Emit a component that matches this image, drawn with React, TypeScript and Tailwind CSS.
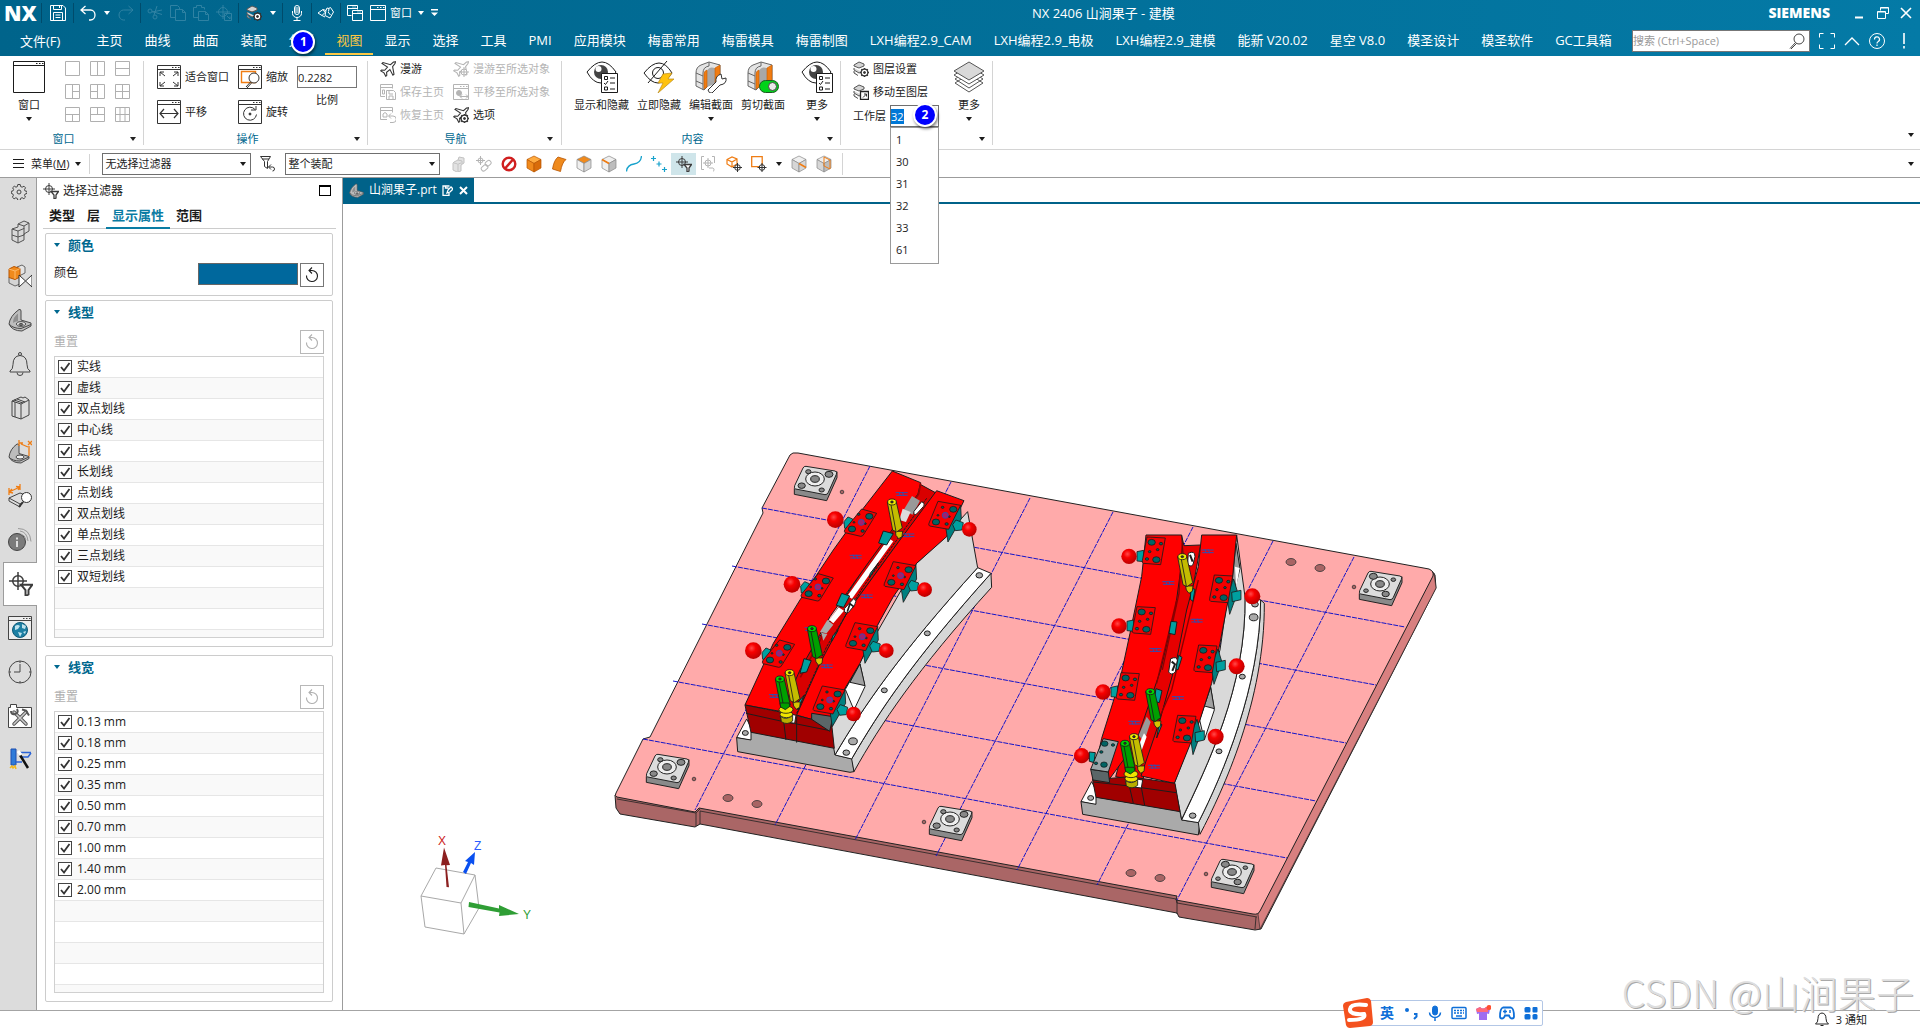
import { useEffect, useRef, useState } from "react";
import type { ReactNode } from "react";

const menuTabs = [
  "主页", "曲线", "曲面", "装配", "分析", "视图", "显示", "选择", "工具", "PMI", "应用模块",
  "梅雷常用", "梅雷模具", "梅雷制图", "LXH编程2.9_CAM", "LXH编程2.9_电极", "LXH编程2.9_建模",
  "能新 V20.02", "星空 V8.0", "模圣设计", "模圣软件", "GC工具箱",
];
const lineTypes = ["实线", "虚线", "双点划线", "中心线", "点线", "长划线", "点划线", "双点划线", "单点划线", "三点划线", "双短划线"];
const lineWidths = ["0.13 mm", "0.18 mm", "0.25 mm", "0.35 mm", "0.50 mm", "0.70 mm", "1.00 mm", "1.40 mm", "2.00 mm"];
const layers = ["1", "30", "31", "32", "33", "61"];

type IconProps = { s?: number; children: ReactNode; className?: string };

function Icon({ s = 16, children, className = "" }: IconProps) {
  return (
    <svg width={s} height={s} viewBox={`0 0 ${s} ${s}`} fill="none" stroke="currentColor" className={`shrink-0 ${className}`} aria-hidden="true">
      {children}
    </svg>
  );
}

function Caret({ className = "" }: { className?: string }) {
  return (
    <svg width="6" height="4" viewBox="0 0 6 4" className={`shrink-0 ${className}`} aria-hidden="true">
      <path d="M0 0h6L3 4z" fill="currentColor" />
    </svg>
  );
}

/* ---------- small icons ---------- */

const FilterTarget = ({ s = 16 }: { s?: number }) => (
  <svg width={s} height={s} viewBox="0 0 16 16" fill="none" stroke="#3c3c3c" className="shrink-0" aria-hidden="true">
    <circle cx="6" cy="6" r="3.5" />
    <path d="M6 0v12M0 6h12" />
    <path d="M8 8.5h7.5l-2.5 3.5v3l-2 1v-4z" fill="#fff" strokeWidth="1.3" />
  </svg>
);

const Win = ({ s, children }: { s: number; children?: ReactNode }) => (
  <Icon s={s}>
    <path d={`M.5 .5h${s - 1}v${s - 1}h-${s - 1}zM.5 4.5h${s - 1}`} />
    <path d={`M${s - 9} 2.5h1.5M${s - 6} 2.5h1.5M${s - 3} 2.5h1.5`} />
    {children}
  </Icon>
);

const Bracket = ({ s = 24, dim = false }: { s?: number; dim?: boolean }) => (
  <svg width={s} height={s} viewBox="0 0 24 24" stroke={dim ? "#555" : "#4a4a4a"} className="shrink-0" aria-hidden="true">
    <path d="M1 16Q2 8 11 1.500q2-.5 2 1.500v9l10 3v3l-9 5q-10 0-13-7z" fill="#bdbdbd" />
    <path d="M5 15q0-6 5-9.500V13q-4 1-5 2" fill="#8f8f8f" stroke="none" />
    <path d="M1 16q4 4.500 12 4.500l10-4" fill="none" />
    <ellipse cx="13" cy="16" rx="4.500" ry="2.300" fill="#e4e4e4" />
    <ellipse cx="13" cy="16.500" rx="2" ry="1" fill="#777" />
  </svg>
);

const Cube = ({ top, left, right, line, children }: { top: string; left: string; right: string; line?: string; children?: ReactNode }) => (
  <Icon s={18}>
    <path d="M9 1l7 3.5-7 4-7-4z" fill={top} stroke={line ?? "#888"} strokeWidth=".7" />
    <path d="M2 4.5l7 4V17l-7-4z" fill={left} stroke={line ?? "#888"} strokeWidth=".7" />
    <path d="M16 4.5l-7 4V17l7-4z" fill={right} stroke={line ?? "#888"} strokeWidth=".7" />
    {children}
  </Icon>
);

const Layers = ({ children }: { children?: ReactNode }) => (
  <Icon>
    <path d="M1 4l5-3 5 2v2L6 7 1 5zM1 7v2l5 3 3-1M1 10v2l4 2.5" fill="#d4d4d4" stroke="#555" />
    {children}
  </Icon>
);

const Gear = () => (
  <g stroke="#333">
    <circle cx="11.5" cy="11.5" r="3.3" fill="#fff" strokeWidth="1.2" />
    <circle cx="11.5" cy="11.5" r="1" fill="#333" />
    <path d="M11.5 7v1M11.5 15v1M7 11.5h1M15 11.5h1M8.3 8.3l.8.8M14 14l.8.8M8.3 14.8l.8-.8M14 9l.8-.8" strokeWidth="1.4" />
  </g>
);

const Plane = ({ children }: { children?: ReactNode }) => (
  <Icon>
    <path d="M15.5.7l-2 .3-3 2.7L3 1.5l-1 1 5.5 3.6L4.7 9.3 1.6 9l-.9.9 3.3 2 1.8 3.4 1-1-.2-3 3.3-2.7 3 5.6 1.1-1-1.4-7.6 2.4-3z" strokeWidth="1.1" />
    {children}
  </Icon>
);

const EyeList = () => (
  <Icon s={32}>
    <path d="M1 11Q9 1 16 1t14 10Q23 22 15 22T1 11z" />
    <circle cx="15" cy="11" r="7" fill="#444" stroke="none" />
    <circle cx="12.5" cy="8" r="3" fill="#fff" stroke="none" />
    <path d="M15.5 12.5h16v19h-16z" fill="#fff" />
    <path d="M18.5 15.5h3v3h-3zM18.5 26h3v3h-3zM24 17h5M24 22h5M24 28h5M18 22l1.5 1.5L22 20" />
  </Icon>
);

const Section = ({ children }: { children: ReactNode }) => (
  <Icon s={32}>
    <path d="M1 12q0-6 5-8l8-3 11 3v20l-8-3-8 8-8-4z" fill="#e4e4e4" stroke="#666" />
    <path d="M14 1v4q-6 1-6 7v17M1 12l7 3M1 20l7 3" stroke="#666" />
    <path d="M12 26V10q2-5 8-3v16z" fill="#a8a8a8" stroke="none" />
    <path d="M9 28V13q0-3 3-4v17zM20 24V7l5-3v20z" fill="#f07c12" stroke="#c65c00" strokeWidth=".6" />
    {children}
  </Icon>
);

const ResetIcon = () => (
  <Icon>
    <path d="M8 3.5a5.500 5.500 0 1 1-5.500 5M8 3.500H5.500M8 .5L5 3.500l3 3" strokeWidth="1.100" />
  </Icon>
);

/* ---------- title bar ---------- */

function QuickGroup({ children, className = "" }: { children: ReactNode; className?: string }) {
  return <div className={`flex h-5 items-center justify-center border-l border-[#004b6b] ${className}`}>{children}</div>;
}

function QuickButton({ label, dim, children }: { label: string; dim?: boolean; children: ReactNode }) {
  return (
    <button aria-label={label} className={dim ? "text-[#2f82a3]" : "text-white"}>
      {children}
    </button>
  );
}

function TitleBar() {
  return (
    <div className="grid h-[26px] grid-cols-[18fr_auto_13fr] items-center text-white">
      <div className="flex items-center pl-1">
        <span className="w-[37px] text-[21px] leading-6 font-extrabold">NX</span>
        <QuickGroup className="w-8">
          <QuickButton label="保存">
            <Icon><path d="M.5.5H13l2.5 2.5v12.5H.5zM3.5.5v4h8v-4M3.5 15.5v-8h9v8M5.5 10h5M5.5 12.5h5M9.5 1v2" /></Icon>
          </QuickButton>
        </QuickGroup>
        <QuickGroup className="w-[67px] gap-2">
          <QuickButton label="撤消">
            <Icon><path d="M5.5 1L1 5l4.500 4M1 5h9.500a4.500 5 0 0 1 0 10H9" strokeWidth="1.3" /></Icon>
          </QuickButton>
          <Caret />
          <QuickButton label="重做" dim>
            <Icon><path d="M10.500 1L15 5l-4.500 4M15 5H5.500a4.500 5 0 0 0 0 10H7" /></Icon>
          </QuickButton>
        </QuickGroup>
        <QuickGroup className="w-[98px] gap-[7px]">
          <QuickButton label="剪切" dim>
            <Icon><circle cx="3" cy="6" r="2" /><circle cx="8" cy="12" r="2" /><path d="M5 7l10-2M7 10L10 1M5 6.500l10 3" /></Icon>
          </QuickButton>
          <QuickButton label="复制" dim>
            <Icon><path d="M5.500 12.500h-5v-12h7l2 2v2M5.500 4.500h7l3 3v8h-10zM12.500 4.500v3h3" /></Icon>
          </QuickButton>
          <QuickButton label="粘贴" dim>
            <Icon><path d="M5.500 12.500h-5v-10h3v-2h5v2h3v2M5.500 6.500h7l3 3v6h-10zM12.500 6.500v3h3" /></Icon>
          </QuickButton>
          <QuickButton label="重复命令" dim>
            <Icon><circle cx="7" cy="7" r="4.500" /><path d="M7 0v14M0 7h14M8.500 8.500v7h7v-7zM11 11l3 3v-2.500" /></Icon>
          </QuickButton>
        </QuickGroup>
        <QuickGroup className="w-11 gap-2">
          <QuickButton label="对象首选项"><Layers><Gear /></Layers></QuickButton>
          <Caret />
        </QuickGroup>
        <QuickGroup className="w-[29px]">
          <QuickButton label="语音">
            <Icon><rect x="5.500" y=".5" width="5" height="9" rx="2.500" /><path d="M3.500 6v2.500a4.500 4 0 0 0 9 0V6M8 12.500v3M4.500 15.500h7M6 3h4M6 5h4M6 7h4" /></Icon>
          </QuickButton>
        </QuickGroup>
        <QuickGroup className="w-[29px]">
          <QuickButton label="触控">
            <Icon><path d="M0 8l5-3.500 2 3-3 3zM5 4.500l3 1 1-2.500 2 .5-.5 3M8 5.500l-1 5 5 2.500 3.500-6-3-4.500-2 1M10 7l2.500 3M4 10.500l3 1.500" /></Icon>
          </QuickButton>
        </QuickGroup>
        <QuickGroup className="gap-[7px] pl-1.5">
          <QuickButton label="切换窗口">
            <Icon><path d="M4.500 10.500h-4V.5h10v4M.5 3.500h10M5.500 5.500h10v10h-10zM5.500 8.500h10M6 1.500v1M8 1.500v1M11 6.500v1M13 6.500v1" /></Icon>
          </QuickButton>
          <button className="flex items-center gap-1 text-[11px] leading-4">
            <Win s={16} />
            窗口
            <Caret className="ml-0.5" />
          </button>
          <button aria-label="自定义工具条">
            <svg width="7" height="8" viewBox="0 0 7 8" fill="currentColor"><path d="M0 0h7v1.500H0zM0 3.500h7L3.500 7z" /></svg>
          </button>
        </QuickGroup>
      </div>
      <h1 className="text-[13px] leading-4">NX 2406 山涧果子 - 建模</h1>
      <div className="flex items-center justify-end pr-2">
        <span className="mr-6 text-[14px] leading-4 font-extrabold">SIEMENS</span>
        <div className="flex gap-[11px]">
          <button aria-label="最小化"><Icon s={12}><path d="M1 10.500h8" strokeWidth="2" /></Icon></button>
          <button aria-label="还原"><Icon s={12}><path d="M3.500 3.500v-3h8v6h-3M3.500 1h8M.5 4.500h8v7h-8zM.5 5h8" /></Icon></button>
          <button aria-label="关闭"><Icon s={12}><path d="M1 1l10 10M11 1L1 11" strokeWidth="1.600" /></Icon></button>
        </div>
      </div>
    </div>
  );
}

function StepBadge({ n, className }: { n: number; className: string }) {
  return (
    <span className={`absolute z-20 flex size-6 items-center justify-center rounded-full border-2 border-white bg-[#0000fe] text-[12px] leading-none font-bold text-white shadow-[1px_2px_3px_rgba(0,0,0,0.5)] ${className}`}>
      {n}
    </span>
  );
}

function MenuBar() {
  const [tab, setTab] = useState("视图");
  return (
    <div className="flex h-[30px] items-center pr-2 text-[13px] leading-[18px] text-white">
      <button className="mr-[14px] pr-[11px] pl-5">文件(F)</button>
      <nav className="flex flex-1">
        {menuTabs.map((t) => (
          <span key={t} className="relative">
            <button
              onClick={() => setTab(t)}
              className={`h-[27px] border-b-2 px-[11px] whitespace-nowrap ${tab === t ? "border-[#fdc844] text-[#fdc844]" : "border-transparent"}`}
            >
              {t}
            </button>
            {t === "分析" && <StepBadge n={1} className="top-0.5 left-3.5" />}
          </span>
        ))}
      </nav>
      <div className="flex items-center gap-[9px]">
        <label className="flex h-[22px] w-[178px] items-center border border-[#777] bg-white pr-1 text-[#444]">
          <input aria-label="搜索" placeholder="搜索 (Ctrl+Space)" className="min-w-0 flex-1 text-[11px] outline-none placeholder:text-[#999]" />
          <Icon><circle cx="10" cy="6" r="5" /><path d="M6.500 9.500L1 15.500M7.500 10.500L2 16" /></Icon>
        </label>
        <button aria-label="全屏"><Icon><path d="M.5 4.500v-4h4M11.500.5h4v4M15.500 11.500v4h-4M4.500 15.500h-4v-4" /></Icon></button>
        <button aria-label="最小化功能区"><Icon><path d="M1 12l7-7 7 7" strokeWidth="1.300" /></Icon></button>
        <button aria-label="帮助" className="mr-1.5">
          <Icon><circle cx="8" cy="8" r="7.500" /><path d="M5.500 6.500a2.500 2.500 0 1 1 3.500 2.200q-1 .5-1 1.800M8 11.500v1.500" strokeWidth="1.200" /></Icon>
        </button>
        <button aria-label="警报" className="-ml-1"><Icon><path d="M8 0v11M8 13v2.500" strokeWidth="1.600" /></Icon></button>
      </div>
    </div>
  );
}

/* ---------- ribbon ---------- */

function Group({ label, children, className = "" }: { label: string; children: ReactNode; className?: string }) {
  return (
    <section className={`flex h-[84px] flex-col border-r border-[#d4d4d4] ${className}`}>
      <div className="flex h-[72px]">{children}</div>
      <div className="relative flex h-3 items-center justify-center pr-[22px] text-[11px] leading-3 text-[#00688f]">
        {label}
        <button aria-label={`${label}选项`} className="absolute right-0 text-[#222]">
          <Caret />
        </button>
      </div>
    </section>
  );
}

function BigButton({ icon, label, menu, className = "" }: { icon: ReactNode; label: string; menu?: boolean; className?: string }) {
  return (
    <button className={`flex min-w-8 flex-col items-center self-start whitespace-nowrap ${className}`}>
      {icon}
      <span className="mt-1 leading-4">{label}</span>
      {menu && <Caret className="mt-1" />}
    </button>
  );
}

function RowButton({ icon, label, disabled }: { icon: ReactNode; label: string; disabled?: boolean }) {
  return (
    <button disabled={disabled} className="flex items-center gap-1 leading-4 whitespace-nowrap text-[#333] disabled:text-[#b4b4b4]">
      {icon}
      <span className={disabled ? "" : "text-[#1b1b1b]"}>{label}</span>
    </button>
  );
}

const layouts = [
  "", "M7.500 0v15", "M0 7.500h15", "M7.500 0v15M7.500 7.500h7.500", "M7.500 0v15M0 7.500h7.500", "M7.500 0v15M0 7.500h15",
  "M0 7.500h15M7.500 7.500v7.500", "M0 7.500h15M7.500 0v7.500", "M5 0v15M10 0v15M0 7.500h15",
];

function WorkLayer() {
  const ref = useRef<HTMLInputElement>(null);
  const [layer, setLayer] = useState("32");
  useEffect(() => {
    ref.current?.focus();
    ref.current?.select();
  }, []);
  return (
    <div className="relative mt-[5px] flex items-center gap-1">
      <label htmlFor="work-layer">工作层</label>
      <input
        id="work-layer"
        ref={ref}
        value={layer}
        onChange={(e) => setLayer(e.target.value)}
        className="h-[22px] w-[49px] border border-[#6f6f6f] bg-white outline-none selection:bg-[#0078d7] selection:text-white"
      />
      <StepBadge n={2} className="-top-0.5 left-[60px]" />
      <ul role="listbox" aria-label="工作层" className="absolute top-[22px] right-0 z-10 w-[49px] border border-[#9a9a9a] bg-white pt-px pb-0.5">
        {layers.map((l) => (
          <li key={l} role="option" aria-selected={l === layer} onClick={() => setLayer(l)} className="px-[5px] leading-[22px]">
            {l}
          </li>
        ))}
      </ul>
    </div>
  );
}

function Ribbon() {
  return (
    <div className="flex h-[94px] border-b border-[#d4d4d4] bg-white pt-[5px] text-[11px] text-[#1b1b1b]">
      <Group label="窗口" className="pr-[7px] pl-[13px]">
        <BigButton icon={<Win s={32} />} label="窗口" menu />
        <div className="ml-5 grid grid-cols-3 gap-x-[10px] gap-y-2 self-start pr-1.5 text-[#b0b0b0]">
          {layouts.map((d, i) => (
            <button key={i} aria-label={`布局 ${i + 1}`}>
              <Icon s={15}><path d={`M.5 .5h14v14H.5z${d}`} /></Icon>
            </button>
          ))}
        </div>
      </Group>

      <Group label="操作" className="pr-[7px] pl-[13px]">
        <div className="flex gap-[9px] pt-1 pr-[3px]">
          <div className="flex flex-col gap-[11px]">
            <RowButton label="适合窗口" icon={<Win s={24}><path d="M3 11V7h4M3 7l5 4M17 7h4v4M21 7l-5 4M3 17v4h4M3 21l5-4M21 17v4h-4M21 21l-5-4" /></Win>} />
            <RowButton label="平移" icon={<Win s={24}><path d="M3 13.500h18M7 9l-4 4.500L7 18M17 9l4 4.500-4 4.500" strokeWidth="1.200" /></Win>} />
          </div>
          <div className="flex flex-col gap-[11px]">
            <RowButton label="缩放" icon={<Win s={24}><path d="M3.500 6.500h14v11h-14z" stroke="#f07c12" strokeWidth="1.400" /><circle cx="16" cy="13" r="5" fill="#fff" /><path d="M12.500 17L8 22M13.500 18L9 23" /></Win>} />
            <RowButton label="旋转" icon={<Win s={24}><path d="M17 9.500a6.500 6.500 0 1 0 1.500 5M13 10h5V6" /><circle cx="12" cy="14" r="1" fill="#333" /></Win>} />
          </div>
          <div className="flex flex-col items-center gap-1 pt-px">
            <input id="scale" defaultValue="0.2282" className="h-[22px] w-[60px] border border-[#777] text-[11px]" />
            <label htmlFor="scale" className="leading-4">比例</label>
          </div>
        </div>
      </Group>

      <Group label="导航" className="pr-2 pl-3">
        <div className="flex gap-[9px] pr-[3px]">
          <div className="flex flex-col gap-[7px]">
            <RowButton label="漫游" icon={<Plane />} />
            <RowButton label="保存主页" disabled icon={<Icon><path d="M5 12.500H.5V.5h12v4M.5 3.500h12M2.500 6h2v4h-2zM6.500 6.500h7l2 2v7h-9zM9 7v3h4M9 15v-3h4v3" /></Icon>} />
            <RowButton label="恢复主页" disabled icon={<Icon><path d="M7 12.500H.5V.5h12v5M.5 3.500h12M3 10V7l2-1.500L7 7v3zM9 9h4a3 3 0 0 1 0 6.500h-3M11 6.500L8.500 9l2.500 2.500" /></Icon>} />
          </div>
          <div className="flex flex-col gap-[7px]">
            <RowButton label="漫游至所选对象" disabled icon={<Plane><circle cx="11" cy="11" r="3" fill="#fff" /><path d="M11 6v10M6 11h10" /></Plane>} />
            <RowButton label="平移至所选对象" disabled icon={<Win s={16}><circle cx="6" cy="9" r="2.500" fill="#b4b4b4" /><path d="M7 12.500h8M9 10.500l-2 2 2 2M13 10.500l2 2-2 2" /></Win>} />
            <RowButton label="选项" icon={<Plane><Gear /></Plane>} />
          </div>
        </div>
      </Group>

      <Group label="内容" className="pr-[7px] pl-3">
        <div className="flex gap-2">
          <BigButton icon={<EyeList />} label="显示和隐藏" />
          <BigButton
            label="立即隐藏"
            icon={<Icon s={32}><path d="M1 12Q9 2 16 2t13 10Q22 22 15 22T1 12z" /><circle cx="15" cy="12" r="5.500" /><path d="M24 0L5 22" /><path d="M20 13l9-1-4 6h6L15 32l5-10h-5z" fill="#ffc20e" stroke="#b98a1e" strokeWidth=".7" /></Icon>}
          />
          <BigButton
            menu
            label="编辑截面"
            icon={<Section><path d="M13 29l8-8q-1-6 5-8l1 5 4-1q1 6-6 7l-8 8q-3 1-4-3z" fill="#fff" stroke="#333" /></Section>}
          />
          <BigButton
            label="剪切截面"
            icon={<Section><rect x="12.500" y="19.500" width="19" height="12" rx="6" fill="#00d21a" stroke="#1d5a22" /><circle cx="25.500" cy="25.500" r="4" fill="#e8e8e8" stroke="#444" /></Section>}
          />
          <BigButton icon={<EyeList />} label="更多" menu className="ml-2" />
        </div>
      </Group>

      <section className="flex h-[84px] flex-col border-r border-[#d4d4d4] pr-[7px] pl-3">
        <div className="flex h-[72px] gap-[14px]">
          <div className="flex flex-col">
            <RowButton label="图层设置" icon={<Layers><Gear /></Layers>} />
            <div className="mt-[7px]">
              <RowButton label="移动至图层" icon={<Layers><path d="M7.500 7.500h8v8h-8z" fill="#fff" stroke="#222" strokeWidth="1.300" /><path d="M10 13.500l3.500-3.500M11 10h2.500v2.500" /></Layers>} />
            </div>
            <WorkLayer />
          </div>
          <BigButton
            menu
            label="更多"
            icon={<Icon s={32}><path d="M16 13L30 22 16 31 2 22zM16 9L30 18 16 27 2 18z" fill="#fff" stroke="#555" /><path d="M16 5L31 14 16 23 1 14z" fill="#fff" stroke="#555" /><path d="M16 1L31 10 16 19 1 10z" fill="#d9d9d9" stroke="#555" /></Icon>}
          />
        </div>
        <button aria-label="图层选项" className="flex h-3 items-center self-end"><Caret /></button>
      </section>
      <button aria-label="功能区选项" className="mb-1.5 ml-auto self-end p-1.5"><Caret /></button>
    </div>
  );
}

/* ---------- selection bar ---------- */

function Combo({ value, label, className }: { value: string; label: string; className: string }) {
  return (
    <div className={`relative ${className}`}>
      <select aria-label={label} defaultValue={value} className="h-[22px] w-full appearance-none border border-[#6f6f6f] bg-white pl-0.5 leading-4">
        <option>{value}</option>
      </select>
      <Caret className="pointer-events-none absolute top-[9px] right-[5px]" />
    </div>
  );
}

const g1 = "#efefef";
const g2 = "#d6d6d6";
const g3 = "#bdbdbd";

const snapTools: { name: string; icon: ReactNode; on?: boolean }[] = [
  { name: "组件", icon: <Icon><path d="M3 6l4-2 1-3 5 1v5l-3 2v6l-4 1-4-2V7zM3 7l4 1 3-1M7 8v7M7 4l4 1v3" fill="#e2e2e2" stroke="#c2c2c2" /></Icon> },
  { name: "链接", icon: <Icon className="text-[#b4b4b4]"><circle cx="4.500" cy="4.500" r="2.500" /><path d="M4.500 0v9M0 4.500h9" /><rect x="9" y="5" width="6" height="4.500" rx="2" transform="rotate(-40 12 7)" /><rect x="5" y="10" width="7" height="4.500" rx="2" transform="rotate(-40 8 12)" /></Icon> },
  { name: "无", icon: <Icon><circle cx="8" cy="8" r="6.300" stroke="#d01f1f" strokeWidth="2.400" /><path d="M12 3.500L4 12.500" stroke="#d01f1f" strokeWidth="2.400" /></Icon> },
  { name: "实体", icon: <Cube top="#ffab40" left="#f08a1c" right="#d96c0a" line="#b85400" /> },
  { name: "片体", icon: <Icon><path d="M1.500 13Q3 4 7 1l8 2.500q-4 3-5.500 12z" fill="#ef8a1d" stroke="#b85400" strokeWidth=".8" /></Icon> },
  { name: "面", icon: <Cube top="#f08a1c" left={g1} right={g2} /> },
  { name: "边", icon: <Cube top={g1} left={g1} right={g3}><path d="M2 4.500l7 4" stroke="#f07c12" strokeWidth="1.800" /></Cube> },
  { name: "曲线", icon: <Icon><path d="M.5 15.500Q1 9 8 8t7.500-8" stroke="#17a2cc" strokeWidth="1.300" /></Icon> },
  { name: "点", icon: <Icon><path d="M2.500 0v5M0 2.500h5M8 5.500v5M5.500 8h5M13.500 11v5M11 13.500h5" stroke="#17a2cc" strokeWidth="1.200" /></Icon> },
  { name: "选择过滤器", icon: <FilterTarget />, on: true },
  { name: "重置过滤器", icon: <Icon className="text-[#b4b4b4]"><circle cx="7" cy="7" r="3" /><path d="M7 2v10M2 7h10M3 .5H.5v13H3M11 .5h2.500V7M8 12h4a2 2 0 0 1 0 3.500" /></Icon> },
  { name: "选择意图", icon: <Icon><path d="M1 3.500L6 1l5 2v5l-5 3-5-3zM1 3.500L6 6l5-3M6 6v5" stroke="#ef7d14" strokeWidth="1.200" /><circle cx="11.500" cy="11.500" r="2.800" fill="#fff" stroke="#333" /><path d="M11.500 7v9M7 11.500h9" stroke="#333" /></Icon> },
  { name: "框选", icon: <Icon><path d="M.7.700h10.500v10H.7z" stroke="#ef7d14" strokeWidth="1.300" /><circle cx="11" cy="11.500" r="2.800" fill="#fff" stroke="#333" /><path d="M11 7v9M6.500 11.500h9" stroke="#333" /></Icon> },
];

function SelectionBar() {
  return (
    <div className="flex h-7 items-center border-b border-[#9c9c9c] bg-white text-[11px] leading-4 text-[#1b1b1b]">
      <button className="ml-[13px] flex items-center gap-[7px]">
        <Icon s={11}><path d="M0 1.500h11M0 5.500h11M0 9.500h11" /></Icon>
        <span>菜单(<u>M</u>)</span>
        <Caret className="-ml-px" />
      </button>
      <span className="mr-3 ml-2 h-5 w-px bg-[#d4d4d4]" />
      <Combo label="类型过滤器" value="无选择过滤器" className="w-[149px]" />
      <button aria-label="清除过滤器" className="mx-[9px] text-[#333]">
        <Icon><path d="M.5.5h10l-3 5v7l-3-2v-5zM2 3h7M8.500 11h4a2 2 0 0 1 0 4M11 8.500L8.500 11l2.500 2.500" /></Icon>
      </button>
      <Combo label="选择范围" value="整个装配" className="w-[155px]" />
      <div className="ml-1.5 flex h-[22px]">
        {snapTools.map((t) => (
          <button key={t.name} aria-label={t.name} className={`flex w-[25px] items-center justify-center ${t.on ? "bg-[#cfe5ea]" : ""}`}>
            {t.icon}
          </button>
        ))}
        <button aria-label="更多选择" className="flex w-[15px] items-center justify-center"><Caret /></button>
        <button aria-label="面规则" className="flex w-[25px] items-center justify-center">
          <Cube top={g1} left={g2} right={g2}><path d="M9 8.500l7 4" stroke="#f07c12" strokeWidth="1.500" /></Cube>
        </button>
        <button aria-label="体规则" className="flex w-[25px] items-center justify-center">
          <Cube top={g1} left={g2} right={g3}><path d="M9 2v9l6 3V5z" stroke="#f07c12" /></Cube>
        </button>
        <span className="ml-1.5 w-px bg-[#d4d4d4]" />
      </div>
      <button aria-label="工具条选项" className="ml-auto p-1.5"><Caret /></button>
    </div>
  );
}

/* ---------- resource rail ---------- */

const railItems: { name: string; icon: ReactNode }[] = [
  { name: "装配导航器", icon: <Icon s={24}><path d="M4 9l6-2V4l6-3 5 2v8l-5 3v6l-6 3-6-3z" fill="#d8d8d8" stroke="#555" /><path d="M4 9l6 2 6-2.500V6l5-3M10 4l6 2M10 11v12M4 15l6 2 6-2M16 8v7" stroke="#555" /></Icon> },
  { name: "约束导航器", icon: <Icon s={24}><path d="M9 3l5-2 3 2v6l-6 3z" fill="#e5e5e5" stroke="#666" /><path d="M1 13v6l6 3 5-2v-7z" fill="#d4d4d4" stroke="#666" /><path d="M1 5l5-2.500 6 2V13l-5 2.500-6-2z" fill="#f08a1c" stroke="#b85400" /><path d="M1 5l6 2 5-2.500M7 7v8" stroke="#ffb866" /><path d="M11 11l6.500 6L11 23zM24 11l-6.500 6 6.500 6z" fill="#fff" stroke="#333" /></Icon> },
  { name: "部件导航器", icon: <Bracket /> },
  { name: "通知", icon: <Icon s={24}><circle cx="12" cy="2" r="1.500" /><path d="M12 3.500q7 .5 7 9 0 5 3 6.500v1H2v-1q3-1.500 3-6.500 0-8.500 7-9zM9 20.500a3 3 0 0 0 6 0" /></Icon> },
  { name: "重用库", icon: <Icon s={24}><path d="M4 5l9-4 2 1 2-1 4 3v15l-8 4-9-3zM4 5l9 3 8-4M13 8v15M6 4l9 3M9 3l8 3M7 6v15" /></Icon> },
  { name: "产品模板", icon: <Icon s={24}><path d="M1 17Q2 9 9 4q2-.5 2 1.500v8l10 3v2l-8 4.500Q4 23 1 17z" fill="#bdbdbd" stroke="#4a4a4a" /><path d="M1 17q3 4 11 4l9-4" stroke="#4a4a4a" /><ellipse cx="12" cy="17" rx="4" ry="2" fill="#eee" /><path d="M11 0v6M11 3h4M13 4l7 3M21 6v10M20 1l4 4M24 1l-4 4" stroke="#ef7d14" strokeWidth="1.300" /></Icon> },
  { name: "MBD 导航器", icon: <Icon s={24}><path d="M1 14l11-5 11 4-11 7zM1 14v3l11 6v-3" fill="#ddd" stroke="#444" /><path d="M1 4v7M12 0v6M1 8L12 3M1 8l3-3M1 8l4 1M12 3L8 2.500M12 3l-2 3" stroke="#ef7d14" strokeWidth="1.300" /><circle cx="18.500" cy="13.500" r="5" fill="#fff" stroke="#333" /><path d="M15 18l-4 5" stroke="#333" strokeWidth="2" /></Icon> },
  { name: "HD3D 工具", icon: <Icon s={24}><circle cx="9" cy="14" r="8.500" fill="#7b7b7b" stroke="#444" /><path d="M9 9.500v2M9 13v6" stroke="#fff" strokeWidth="1.500" /><path d="M12 3q7 1 8 10M10 .5q12 0 13 13M13 6q4 1 5 6" stroke="#999" /></Icon> },
  { name: "选择过滤器", icon: <FilterTarget s={24} /> },
  { name: "Web 浏览器", icon: <Icon s={24}><path d="M.5.5h23v23H.5z" fill="#eee" /><path d="M.5 4.500h23M15 2.500h1.500M18 2.500h1.500M21 2.500h1.500" /><circle cx="12" cy="14" r="7.500" fill="#1d7fa3" stroke="#0e5a78" /><path d="M7 10q3-2 5 0l-2 3-3 1zM14 8l4 2-1 3-3-1zM10 16l4 1-2 4zM15 16l3-1-1 3z" fill="#bfe3ee" stroke="none" /></Icon> },
  { name: "历史记录", icon: <Icon s={24}><circle cx="12" cy="12" r="11" /><path d="M12 4v8H6M12 1v2M12 21v2M1 12h2M21 12h2" /></Icon> },
  { name: "加工向导", icon: <Icon s={24}><path d="M.5 3.500h2v-3h6v3h15v20H.5z" fill="#fff" /><path d="M6 8l12 12M18 8L6 20" stroke="#555" strokeWidth="3.500" strokeLinecap="round" /><path d="M6 8l12 12M18 8L6 20" stroke="#ccc" strokeWidth="1.500" strokeLinecap="round" /><path d="M3 7q0 4 4 3t2-5M14 5.500l4 1 3 5" stroke="#555" strokeWidth="2" /></Icon> },
  { name: "外挂工具", icon: <Icon s={24}><path d="M3 1h5v16H3z" fill="#2f7bd8" stroke="#1d4fb0" /><path d="M10 4.500h13M12 9h8l3-4M8 14h6" stroke="#2a63d6" strokeWidth="1.500" /><path d="M12 7l8 13" stroke="#111" strokeWidth="2.500" /><path d="M10 3l3 4" stroke="#fff" strokeWidth="3" /><path d="M2 20l2-2 1 2 2-2 1 3" stroke="#f2b81e" strokeWidth="1.500" /></Icon> },
];

function Rail() {
  return (
    <nav className="flex w-[37px] shrink-0 flex-col bg-[#dcdcdc] text-[#444] shadow-[inset_-1px_0_0_#9c9c9c]">
      <button aria-label="资源条选项" className="mb-1 flex h-7 items-center justify-center">
        <Icon><circle cx="8" cy="8" r="2" /><path d="M6.800.5h2.400l.4 2 1.500.7 1.900-1 1.500 1.600-1 1.900.6 1.300 2 .400v2l-2 .6-.6 1.400 1 1.700-1.600 1.600-1.800-1-1.500.700-.4 2H6.800l-.5-2-1.500-.6-1.700 1-1.700-1.600 1-1.900-.6-1.400-1.500-.5V7.300l1.700-.4.6-1.400-1-1.700L3.300 2.200l1.700 1 1.400-.7z" /></Icon>
      </button>
      {railItems.map((r) => (
        <button
          key={r.name}
          aria-label={r.name}
          className={`ml-[3px] flex h-11 items-center justify-center ${r.name === "选择过滤器" ? "border-y border-l border-[#9c9c9c] bg-white" : "mr-px"}`}
        >
          {r.icon}
        </button>
      ))}
    </nav>
  );
}

/* ---------- filter panel ---------- */

function CheckRow({ id, text }: { id: string; text: string }) {
  return (
    <li className="border-b border-[#e6e6e6] odd:bg-white even:bg-[#f9f9f9]">
      <label htmlFor={id} className="relative flex h-5 items-center gap-[5px] pl-[3px] leading-4">
        <input id={id} type="checkbox" defaultChecked className="peer size-[14px] appearance-none border border-[#444] bg-white" />
        <svg width="14" height="14" viewBox="0 0 14 14" className="pointer-events-none absolute left-[3px] hidden peer-checked:block" aria-hidden="true">
          <path d="M3 7l3 3.500L11.500 3" fill="none" stroke="#333" strokeWidth="1.800" />
        </svg>
        {text}
      </label>
    </li>
  );
}

function PanelHeading({ children }: { children: ReactNode }) {
  return (
    <h2 className="flex items-center gap-2 text-[13px] leading-5 font-bold text-[#00688f]">
      <Caret />
      {children}
    </h2>
  );
}

function CheckPanel({ title, prefix, rows }: { title: string; prefix: string; rows: string[] }) {
  return (
    <section className="flex min-h-0 flex-1 flex-col rounded-xs border border-[#ccc] px-2 pt-px pb-2">
      <PanelHeading>{title}</PanelHeading>
      <div className="mt-2 flex items-center justify-between text-[#b0b0b0]">
        <span className="leading-4">重置</span>
        <button disabled aria-label={`重置${title}`} className="flex size-6 items-center justify-center border border-[#b8b8b8]"><ResetIcon /></button>
      </div>
      <ul className="mt-0.5 min-h-0 flex-1 overflow-hidden border border-[#d0d0d0]">
        {rows.map((r, i) => (
          <CheckRow key={i} id={`${prefix}-${i}`} text={r} />
        ))}
        {[0, 1, 2, 3, 4].map((i) => (
          <li key={`blank-${i}`} aria-hidden="true" className="h-[21px] border-b border-[#e6e6e6] odd:bg-white even:bg-[#f9f9f9]" />
        ))}
      </ul>
    </section>
  );
}

function FilterPanel() {
  const tabs = ["类型", "层", "显示属性", "范围"];
  return (
    <aside className="flex w-[306px] shrink-0 flex-col border-r border-[#9c9c9c] bg-white text-[12px] text-[#1b1b1b]">
      <header className="flex h-[25px] items-center gap-1 pr-[11px] pl-1.5">
        <FilterTarget />
        <span className="flex-1 leading-4">选择过滤器</span>
        <button aria-label="最大化" className="h-[11px] w-3 border border-t-2 border-black" />
      </header>
      <div className="mx-1.5 flex border-b border-[#ccc]">
        {tabs.map((t) => (
          <button
            key={t}
            className={`-mb-px h-[26px] border-b-2 px-1.5 text-[13px] leading-[22px] font-bold ${t === "显示属性" ? "border-[#0a7ca3] text-[#0a7ca3]" : "border-transparent"}`}
          >
            {t}
          </button>
        ))}
      </div>
      <div className="flex min-h-0 flex-1 flex-col pt-1 pr-[9px] pb-2 pl-2">
        <section className="mb-1 rounded-xs border border-[#ccc] px-2 pt-px pb-2">
          <PanelHeading>颜色</PanelHeading>
          <div className="mt-2 flex items-start gap-0.5">
            <span className="flex-1 leading-5">颜色</span>
            <button aria-label="选择颜色" className="h-[22px] w-[100px] border border-[#666] bg-[#00689d]" />
            <button aria-label="重置颜色" className="flex size-6 items-center justify-center border border-[#777]"><ResetIcon /></button>
          </div>
        </section>
        <div className="flex min-h-0 flex-1 flex-col gap-2">
          <CheckPanel title="线型" prefix="type" rows={lineTypes} />
          <CheckPanel title="线宽" prefix="width" rows={lineWidths} />
        </div>
      </div>
    </aside>
  );
}

/* ---------- 3D model ---------- */

const acrossLines = [[762, 508, 1405, 627], [732, 566, 1376, 685], [702, 624, 1346, 743], [673, 681, 1316, 801], [643, 739, 1287, 858]];
const downLines = [[870, 466, 695, 810], [951, 482, 775, 825], [1030, 498, 855, 840], [1113, 512, 936, 856], [1193, 527, 1017, 870], [1273, 541, 1097, 885], [1354, 557, 1177, 900]];

function Clamp({ x, y, flip }: { x: number; y: number; flip?: boolean }) {
  const holes = flip
    ? [[-20, -23, 12], [17, 30, 11], [40, -13, 7], [-42, 20, 7]]
    : [[-40, 20, 11], [42, -14, 12], [-20, -22, 8], [20, 33, 8]];
  return (
    <g transform={`translate(${x} ${y}) scale(.3333)`} stroke="#222" strokeWidth="3">
      <path d="M-62 28v18L35 65 66-4v-18z" fill="#8a8a8a" />
      <path d="M-27-38L60-24q8 2 4 10L40 40q-4 8-10 7L-58 30q-6-2-3-10l25-53q3-6 9-5z" fill="#dcdcdc" />
      <ellipse rx="28" ry="21" fill="#eee" />
      <ellipse rx="13" ry="10" fill="#888" />
      {holes.map(([cx, cy, r]) => (
        <ellipse key={cx} cx={cx} cy={cy} rx={r} ry={r * 0.75} fill="#888" />
      ))}
    </g>
  );
}

function Post({ x, y, green, rings }: { x: number; y: number; green?: boolean; rings?: boolean }) {
  const main = green ? "#00a000" : "#c4bc00";
  return (
    <g transform={`translate(${x} ${y})`} stroke="#1a1a1a" strokeWidth="2.500">
      <path d="M10 88l2 12 8 10 10-6 2-16z" fill="#d6c400" />
      <path d="M-14 0l16 84 12 6 17-12L13 0z" fill={main} />
      <path d="M-3 8l15 80" fill="none" />
      <ellipse rx="13" ry="9" fill={green ? "#00d800" : "#f2ee00"} />
      <ellipse rx="4" ry="3" fill="#333" />
      {rings && (
        <g fill="#f0e400">
          <path d="M2 112q18 14 36-4v18q-16 14-34 2z" fill="#b8ae00" />
          <ellipse cx="19" cy="106" rx="19" ry="10" />
          <ellipse cx="18" cy="92" rx="21" ry="11" />
          <path d="M2 84l14 8 14-10-3-10H0z" fill={main} />
        </g>
      )}
    </g>
  );
}

function Holes({ pts }: { pts: number[][] }) {
  return (
    <g fill="#006464" stroke="#111" strokeWidth="2">
      {pts.map(([x, y, r], i) => (
        <ellipse key={i} cx={x} cy={y} rx={r} ry={r * 0.8} />
      ))}
    </g>
  );
}

/* plate, arm and ball of the long fixture */
function PlateA({ x, y, right }: { x: number; y: number; right?: boolean }) {
  return (
    <g transform={`translate(${x} ${y})`} stroke="#1c1c1c" strokeWidth="2.500">
      {right ? (
        <>
          <path d="M48-30l2 40-40 70-6-40z" fill="#008080" />
          <path d="M24 28l10-14 22 8-4 22-20 2z" fill="#00a0a0" />
          <path d="M-20-42l68 12-36 72-57-10q-4-2-2-8z" fill="#f40000" />
        </>
      ) : (
        <>
          <path d="M-50-2l12-14 14 6-4 30-20-2z" fill="#00a0a0" />
          <path d="M3-40l45 13-38 62q-4 8-10 7l-47-11q-4-4 0-10z" fill="#f40000" />
        </>
      )}
      <Holes pts={[[26, -18, 11], [-26, 20, 11], [-6, -24, 4], [6, 26, 5], [-20, 0, 3], [14, 4, 3]]} />
      <circle cx="2" cy="0" r="9" fill="#a02070" stroke="#2b4fb5" />
      <circle cx={right ? 74 : -76} cy={right ? 42 : -8} r={right ? 22 : 25} fill="url(#ball)" stroke="none" />
    </g>
  );
}

/* same parts seen on the second fixture */
function PlateB({ x, y, right }: { x: number; y: number; right?: boolean }) {
  return (
    <g transform={`translate(${x} ${y})`} stroke="#1c1c1c" strokeWidth="2.500">
      {right ? (
        <>
          <path d="M24 0l12-30 12 40-24 66-6-40z" fill="#008080" />
          <path d="M30 10l28-6v28l-26 6z" fill="#00a0a0" />
        </>
      ) : (
        <path d="M-52 2l20-4v34l-20-2z" fill="#00a0a0" />
      )}
      <path d="M-22-42l55 3-14 80-52-4q-4-2-3-8z" fill="#f40000" />
      <Holes pts={[[-8, -26, 11], [6, 26, 11], [20, -22, 5], [-22, 24, 5], [10, -4, 4], [-14, 2, 4]]} />
      <circle cx={right ? 92 : -76} cy={right ? 22 : 16} r={right ? 24 : 23} fill="url(#ball)" stroke="none" />
    </g>
  );
}

function Marks({ pts }: { pts: number[][] }) {
  return (
    <g stroke="#2b4fb5" strokeWidth="3" fill="none">
      {pts.map(([x, y], i) => (
        <path key={i} d={`M${x - 18} ${y - 4}h36M${x - 16} ${y + 4}h34M${x - 8} ${y - 6}l4 12M${x + 2} ${y - 6}l4 12`} />
      ))}
    </g>
  );
}

function LeftFixture() {
  return (
    <g transform="translate(600 430) scale(.3333)" stroke="#1c1c1c" strokeWidth="3" strokeLinejoin="round">
      <path d="M410 923l30-56 20 40-5 25z" fill="#fff" />
      <path d="M410 923l43 7v-25l250 40 4 30 50 12 5 38-12 2-337-62z" fill="#aaa" />
      <path d="M755 987l7 38C840 885 950 720 1175 472l-2-42C940 690 840 840 755 987z" fill="#d6d6d6" />
      <path d="M705 975C790 830 900 670 1133 413l40 17C940 690 840 840 755 987z" fill="#fff" />
      <path d="M1035 320l68-75 30 168C900 670 790 830 705 975l-15-80 45-120 215-375z" fill="#d9d9d9" />
      <path d="M780 702l15 68-33 70-26-62z" fill="#fff" />
      <path d="M780 702l15 65-45-10z" fill="#a0a0a0" />
      {[[1138, 436, 10], [982, 610, 9], [853, 781, 9], [759, 934, 13], [739, 968, 10], [436, 909, 9]].map(([x, y, r]) => (
        <ellipse key={x} cx={x} cy={y} rx={r} ry={r * 0.8} fill="#aaa" />
      ))}
      {/* rails */}
      <path d="M955 160l55 30-110 140-160 220-150 310-50-20 55-120z" fill="#d90000" />
      <path d="M877 123l85 35-8 34-154 213-110 155-90 160-55 125-110-20 85-185 80-130 100-150 90-125z" fill="red" />
      <path d="M1010 182l82 30-52 108-90 80-70 100-50 90-50 110-45 75-45 110-100-30 70-155 80-150 80-110 80-110z" fill="red" />
      <path d="M962 160l-6 32-165 240-110 160-80 150" fill="none" stroke="#900" strokeWidth="5" />
      <path d="M980 205L790 470 680 650 590 850" fill="none" strokeDasharray="8 3" />
      {/* groove between the rails */}
      <path d="M866 325L742 498l14 8 124-172z" fill="#fff" stroke="none" />
      <path d="M716 532l-28 38 12 10 32-38z" fill="#fff" stroke="none" />
      <path d="M936 198l24 14-22 42-28-12z" fill="#999" stroke="none" />
      <path d="M908 236l24 10-14 30-20-6z" fill="#ddd" stroke="none" />
      <path d="M682 570l18 14-20 26-20-4zM664 608l18 4-12 20z" fill="#aaa" stroke="none" />
      <path d="M435 825l110 22 45 10 105 25 8 73-250-48z" fill="#a00000" />
      <path d="M438 850l108 24 44 8 100 20M548 850l10 80M590 860v78" fill="none" />
      <Marks pts={[[905, 192], [767, 380], [925, 316], [800, 499], [680, 709], [525, 798], [632, 597]]} />
      <path d="M965 215q12 5 5 15l-20 22q-10 6-8-8z" fill="#fff" />
      <path d="M762 505q10 8 2 20l-18 22q-16 6-12-12z" fill="#fff" />
      <path d="M742 545l8-24 12 10" fill="none" strokeWidth="5" />
      <g fill="#00a0a0">
        <path d="M850 303l30 8-20 34-24-6z" />
        <path d="M725 490l24 8-18 34-22-6z" />
        <path d="M612 686l22 6-14 34-20 4z" />
        <path d="M836 398l-28 46 3-14zM714 602l-20 34 4-18zM612 796l-18 44 2-26z" />
      </g>
      <PlateA x={782} y={277} />
      <PlateA x={652} y={471} />
      <PlateA x={536} y={670} />
      <PlateA x={1034} y={256} right />
      <PlateA x={900} y={437} right />
      <PlateA x={785} y={620} right />
      <path d="M635 850v18l54 36 10-44z" fill="#5b6668" />
      <PlateA x={687} y={810} right />
      <Post x={876} y={216} />
      <Post x={636} y={596} green />
      <Post x={569} y={728} />
      <path d="M540 860l14-12 34 8-4 24-36-6z" fill="#fff" />
      <Post x={540} y={747} green rings />
    </g>
  );
}

function RightFixture() {
  return (
    <g transform="translate(1020 500) scale(.3333)" stroke="#1c1c1c" strokeWidth="3" strokeLinejoin="round">
      <path d="M183 905l32-60 20 40-7 30z" fill="#fff" />
      <path d="M183 905l45 8v-22l252 42 5 27 55 8-5 37-347-62z" fill="#aaa" />
      <path d="M535 968l5 35C610 870 735 600 733 310l-11-10C720 560 610 820 535 968z" fill="#d6d6d6" />
      <path d="M485 960C560 800 680 560 675 290l47 10C720 560 610 820 535 968z" fill="#fff" />
      <path d="M650 105l25 185C680 560 560 800 485 958l-22-108 77-200 60-200z" fill="#d9d9d9" />
      <path d="M648 130l12 75-15 60-8-30z" fill="#999" />
      <path d="M645 200l14 4-10 58z" fill="#fff" stroke="none" />
      <path d="M572 562l11 68-30 90-14-60z" fill="#fff" />
      <path d="M572 562l11 64-30-8z" fill="#a0a0a0" />
      {[[705, 313, 10], [701, 352, 13], [667, 530, 9], [597, 754, 9], [518, 947, 10], [212, 894, 9]].map(([x, y, r]) => (
        <ellipse key={x} cx={x} cy={y} rx={r} ry={r * 0.8} fill="#aaa" />
      ))}
      <path d="M485 107l7 30 50-2-40 220-40 160-95 330-80-15z" fill="#e60000" />
      <path d="M378 105h107l4 55-22 160-45 190-75 220-77 105-52 5 27-125 55-175 30-140 35-170z" fill="red" />
      <path d="M545 105h105l-12 125-38 200-25 120-35 110-77 190-100-22 57-168 50-180 30-150 35-130z" fill="red" />
      <path d="M487 130l-10 150-50 230M470 300l-60 250M535 240l-80 330-40 90" fill="none" stroke="#800" strokeWidth="4" />
      <path d="M380 650l12 16-20 60-16-20z" fill="#999" stroke="none" />
      <path d="M372 700l8 10-22 60-8-20z" fill="#fff" stroke="none" />
      <path d="M218 840l110-10 137 20 15 85-252-43z" fill="#a00000" />
      <path d="M220 846l108 12 140 20M328 858l12 52M364 862l10 54" fill="none" />
      <Marks pts={[[563, 154], [445, 249], [530, 362], [406, 450], [474, 594], [343, 668], [402, 800]]} />
      <path d="M505 160q20-10 20 10l-6 24q-10 10-16-4z" fill="#fff" />
      <path d="M452 476q20-8 20 6l-6 34q-12 12-20 0z" fill="#fff" />
      <path d="M510 165l8 20M455 485l10 8-8 20" fill="none" strokeWidth="6" />
      <g fill="#00a0a0">
        <path d="M453 364l18 2-6 38-18-4z" />
        <path d="M513 264l12 4-6 36-8-6zM476 466l10 6-12 38-6-4zM408 566l18 6-8 36-16-4zM418 670l-8 44 16-40z" />
      </g>
      <PlateB x={403} y={153} />
      <PlateB x={373} y={362} />
      <PlateB x={325} y={560} />
      <PlateB x={605} y={267} right />
      <PlateB x={558} y={477} right />
      <PlateB x={495} y={688} right />
      <circle cx="185" cy="767" r="23" fill="url(#ball)" stroke="none" />
      <path d="M208 756l18 2-4 30-14-4z" fill="#00a0a0" />
      <path d="M212 808l53 8 4 32-50-8z" fill="#5b6668" />
      <path d="M250 716l45 9-30 91-53-8z" fill="#9aa5a8" />
      <Holes pts={[[254, 731, 10], [252, 794, 10], [279, 735, 5], [228, 790, 5], [244, 756, 5]]} />
      <Post x={487} y={170} />
      <Post x={391} y={575} green />
      <Post x={342} y={710} />
      <path d="M316 846l14-12 38 6-4 24-36-4z" fill="#fff" />
      <Post x={315} y={730} green rings />
    </g>
  );
}

function Model() {
  return (
    <svg viewBox="343 204 1577 806" className="block size-full" preserveAspectRatio="xMidYMid meet" role="img" aria-label="装配模型">
      <defs>
        <radialGradient id="ball" cx=".4" cy=".35" r=".7">
          <stop offset="0" stopColor="#ff4a4a" />
          <stop offset=".35" stopColor="#f80000" />
          <stop offset="1" stopColor="#b40000" />
        </radialGradient>
      </defs>
      <g stroke="#222" strokeLinejoin="round">
        <path d="M615 795l1 13 4 6 75 13 5-3 477 89 2 4 76 13 6-1 175-341-1-13-3-4z" fill="#aa6666" />
        <path d="M1258 914l2 15 176-341-2-15z" fill="#d88080" strokeWidth=".6" />
        <path d="M790 455q2-3 8-2l631 116q5 2 4 7l-173 335q-2 4-7 3l-77-14 1-4-478-88-4 4-78-15q-3-1-1-4l27-54 7-2 113-224-1-5z" fill="#ffaaaa" />
        <path d="M617 799l79 14 4-4M700 811l476 88 1 4 80 14M696 813v13M700 811v13M1177 900v14M1256 917l-1 12" fill="none" strokeWidth=".8" />
      </g>
      <g stroke="#1414c8" strokeDasharray="5 1">
        {[...acrossLines, ...downLines].map(([x1, y1, x2, y2]) => (
          <line key={`${x1}-${y1}`} x1={x1} y1={y1} x2={x2} y2={y2} />
        ))}
      </g>
      <g fill="#a86464" stroke="#333" strokeWidth=".8">
        {[[1291, 562], [1320, 568], [1131, 873], [1160, 878], [728, 798], [757, 804]].map(([x, y]) => (
          <ellipse key={x} cx={x} cy={y} rx="5" ry="3.500" />
        ))}
        {[[1354, 587], [1206, 874], [924, 822], [694, 779], [842, 492]].map(([x, y]) => (
          <circle key={x} cx={x} cy={y} r="1.800" />
        ))}
      </g>
      <Clamp x={815} y={479} />
      <Clamp x={667} y={767} />
      <Clamp x={950} y={819} />
      <Clamp x={1232} y={872} flip />
      <Clamp x={1380} y={584} flip />
      <LeftFixture />
      <RightFixture />

      {/* view triad */}
      <g fill="none" stroke="#a8a8a8">
        <path d="M436 868l39 7-14 28-40-7zM421 896l4 31 39 7-3-31M475 875l4 33-15 26" />
      </g>
      <path d="M446.500 887l-1.500-22-4 .5 3-18 6 17.500-3.500.3 2.500 22z" fill="#8c2020" />
      <path d="M463 872l5-10-3-1 10-9-1 13-3-2-5 11z" fill="#0a50f0" />
      <path d="M469 902l30 6.500v-3.500l20 9-20 2 .5-3.500-31-5.500z" fill="#2f9e35" />
      <g className="font-['Liberation_Sans'] text-[12px]">
        <text x="438" y="845" fill="#c22">X</text>
        <text x="474" y="850" fill="#2a5cff">Z</text>
        <text x="523" y="919" fill="#2f9e35">Y</text>
      </g>
    </svg>
  );
}

function Workspace() {
  return (
    <main className="flex min-w-0 flex-1 flex-col bg-white">
      <div className="flex h-[26px] border-b-2 border-[#006289]">
        <div className="flex items-center bg-[#006289] pr-1.5 pl-1.5 text-[12px] leading-4 text-white">
          <Bracket s={15} dim />
          <button className="mr-[5px] ml-[5px]">山涧果子.prt</button>
          <Icon s={11}><path d="M7.500 1H1v9.500h6V8M3.500 1v2h3M5 8l1-3 3-3 2 2-3 3z" strokeWidth="1.300" /></Icon>
          <button aria-label="关闭标签" className="ml-1.5"><Icon s={9}><path d="M1 1l7 7M8 1L1 8" strokeWidth="2" /></Icon></button>
        </div>
      </div>
      <div className="min-h-0 flex-1">
        <Model />
      </div>
    </main>
  );
}

/* ---------- bottom ---------- */

function ImeBar() {
  return (
    <div className="absolute right-[377px] bottom-[3px] flex h-[26px] items-center rounded-xs border border-[#b3c7e6] bg-white pr-[3px] pl-[18px] text-[#0f6fd8]">
      <svg width="32" height="32" viewBox="0 0 32 32" className="absolute -left-[19px]" aria-hidden="true">
        <path d="M4 5l21-4q3 0 4 3l2 21q0 3-3 4L8 31q-3 0-4-3L1 9q0-3 3-4z" fill="#f4511e" />
        <path d="M24 8Q9 6 8 12t14 5q3 6-15 6" fill="none" stroke="#fff" strokeWidth="4" strokeLinecap="round" />
      </svg>
      <div className="flex items-center gap-2">
        <button className="w-4 text-[14px] leading-5 font-bold">英</button>
        <Icon><circle cx="4" cy="5" r="2" fill="currentColor" stroke="none" /><path d="M11 9h2.500v2.500L11 14" strokeWidth="2" /></Icon>
        <Icon><rect x="5.500" y="1" width="5" height="9" rx="2.500" fill="currentColor" /><path d="M2.500 7.500a5.500 5 0 0 0 11 0M8 12.500V16" strokeWidth="1.500" /></Icon>
        <Icon><rect x="1" y="2.500" width="14" height="11" rx="1" strokeWidth="1.500" /><path d="M3 5.500h10M3 8h10" strokeDasharray="2 1" strokeWidth="1.500" /><path d="M5 11h6" strokeWidth="1.500" /></Icon>
        <Icon><path d="M1 4l4-2q3 3 6 0l4 2-1 5-2-.5V15H4V8.500L2 9z" fill="#a06cf0" stroke="none" /><path d="M1 4l4-2q3 3 6 0l2 1v4H2z" fill="#ff6a7a" stroke="none" /><circle cx="14" cy="2.500" r="2.500" fill="#ff5030" stroke="none" /></Icon>
        <Icon><path d="M4 2.500h8q3 1 3 9 0 2-2 2-2 0-3-3H6q-1 3-3 3-2 0-2-2 0-8 3-9z" strokeWidth="1.800" /><path d="M4 6.500h4M6 4.500v4M11 5v3" strokeWidth="1.500" /></Icon>
        <Icon><g fill="currentColor" stroke="none"><rect x="1.500" y="2" width="6" height="5.500" rx="1.500" /><rect x="9.500" y="2" width="5" height="5.500" rx="1" /><rect x="1.500" y="9" width="6" height="5.500" rx="1.500" /><rect x="9.500" y="9" width="5" height="5.500" rx="1.500" /></g></Icon>
      </div>
    </div>
  );
}

export default function App() {
  return (
    <div className="relative flex h-screen flex-col overflow-hidden bg-white font-['Open_Sans','Noto_Sans_CJK_SC',sans-serif]">
      <header className="bg-linear-to-r from-[#00648b] to-[#047aa6]">
        <TitleBar />
        <MenuBar />
      </header>
      <Ribbon />
      <SelectionBar />
      <div className="flex min-h-0 flex-1">
        <Rail />
        <FilterPanel />
        <Workspace />
      </div>
      <footer className="flex h-[19px] items-center justify-end border-t border-[#a4a4a4] pr-[53px] text-[11px] leading-4 text-[#222]">
        <button className="flex items-center gap-1.5">
          <Icon><path d="M8 1q4 .5 4 5.500 0 4 2.500 5.500h-13Q4 10.500 4 6.500 4 1.500 8 1zM6.500 13.500h3" /></Icon>
          3 通知
        </button>
      </footer>
      <ImeBar />
      <p className="pointer-events-none absolute right-1.5 bottom-[17px] font-['Noto_Sans_CJK_SC',sans-serif] text-[38px] leading-10 font-light text-[#dedede] [text-shadow:1px_1px_0_#a9a9a9]">
        CSDN @山涧果子
      </p>
    </div>
  );
}
